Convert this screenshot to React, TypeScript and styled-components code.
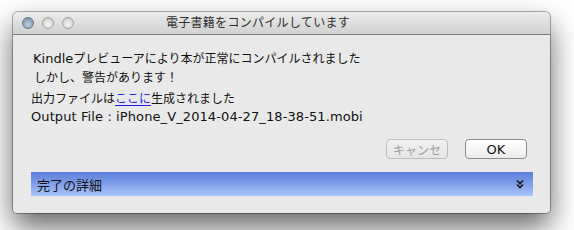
import React from "react";
import styled, { createGlobalStyle } from "styled-components";

const Global = createGlobalStyle`
  html, body { margin: 0; padding: 0; background: #ffffff; }
  body { font-family: "DejaVu Sans", "Noto Sans CJK JP", sans-serif; }
`;

const Page = styled.div`
  width: 574px;
  height: 230px;
  padding: 12px 0 0 13px;
  box-sizing: border-box;
  overflow: hidden;
`;

const Window = styled.div`
  width: 537px;
  height: 201px;
  background: #e9e9e9;
  border-radius: 5px 5px 4px 4px;
  box-shadow: 0 0 0 1px rgba(0, 0, 0, 0.3), 0 14px 30px rgba(0, 0, 0, 0.62);
  display: flex;
  flex-direction: column;
  overflow: hidden;
`;

const TitleBar = styled.div`
  height: 22px;
  flex: none;
  display: flex;
  align-items: center;
  padding-left: 9px;
  background: linear-gradient(#ececec, #d1d1d1);
  border-bottom: 1px solid #7c7c7c;
  border-radius: 5px 5px 0 0;
`;

const Lights = styled.div`
  display: flex;
  gap: 8px;
`;

const Light = styled.div<{ $active?: boolean }>`
  width: 12px;
  height: 12px;
  border-radius: 50%;
  box-sizing: border-box;
  border: 1px solid ${(p) => (p.$active ? "#66798d" : "#a3a3a3")};
  background: ${(p) =>
    p.$active
      ? "radial-gradient(circle at 50% 65%, #c2d2e2 0%, #8ea4ba 55%, #6c8197 100%)"
      : "radial-gradient(circle at 50% 65%, #f6f6f6 0%, #dcdcdc 55%, #bdbdbd 100%)"};
`;

const Title = styled.div`
  flex: 1;
  text-align: center;
  padding-right: 108px;
  font-size: 12px;
  letter-spacing: 0.3px;
  color: #2e2e2e;
  line-height: 22px;
`;

const Body = styled.div`
  flex: 1;
  display: flex;
  flex-direction: column;
  padding: 0 17px 17px 18px;
`;

const Line = styled.div<{ $top: number; $indent?: number; $size?: number }>`
  margin-top: ${(p) => p.$top}px;
  padding-left: ${(p) => p.$indent ?? 0}px;
  height: 18px;
  line-height: 18px;
  font-size: ${(p) => p.$size ?? 12}px;
  letter-spacing: ${(p) => (p.$size ? 0.1 : 0)}px;
  color: #111;
  white-space: nowrap;
`;

const Latin = styled.span`
  font-size: 13px;
`;

const Link = styled.span`
  color: #1f1fe6;
  text-decoration: underline;
  text-underline-offset: 2px;
`;

const Buttons = styled.div`
  margin-top: 13px;
  display: flex;
  justify-content: flex-end;
  gap: 17px;
  padding-right: 6px;
`;

const Button = styled.div<{ $disabled?: boolean }>`
  width: 62px;
  height: 20px;
  box-sizing: border-box;
  border-radius: 4px;
  display: flex;
  align-items: center;
  justify-content: center;
  font-size: ${(p) => (p.$disabled ? 12 : 13)}px;
  border: 1px solid ${(p) => (p.$disabled ? "#bdbdbd" : "#8d8d8d")};
  color: ${(p) => (p.$disabled ? "#9d9d9d" : "#111")};
  background: ${(p) =>
    p.$disabled
      ? "linear-gradient(#f0f0f0, #e6e6e6)"
      : "linear-gradient(#ffffff, #ececec)"};
`;

const DetailBar = styled.div`
  margin-top: 13px;
  height: 24px;
  display: flex;
  align-items: center;
  justify-content: space-between;
  padding: 0 9px 0 6px;
  background: linear-gradient(#5a7ddb 0%, #7d9ce8 45%, #a9c7fa 100%);
  font-size: 13px;
  color: #111;
`;

const Chevron = () => (
  <svg width="8" height="10" viewBox="0 0 8 10">
    <path d="M1 1.5 L4 4.5 L7 1.5" stroke="#111" strokeWidth="1.6" fill="none" />
    <path d="M1 5.5 L4 8.5 L7 5.5" stroke="#111" strokeWidth="1.6" fill="none" />
  </svg>
);

export default function App() {
  return (
    <>
      <Global />
      <Page>
        <Window>
          <TitleBar>
            <Lights>
              <Light $active />
              <Light />
              <Light />
            </Lights>
            <Title>電子書籍をコンパイルしています</Title>
          </TitleBar>
          <Body>
            <Line $top={15} $indent={2}>
              <Latin>Kindle</Latin>プレビューアにより本が正常にコンパイルされました
            </Line>
            <Line $top={1} $indent={3}>しかし、警告があります！</Line>
            <Line $top={3}>
              出力ファイルは<Link>ここに</Link>生成されました
            </Line>
            <Line $top={0} $size={13}>Output File : iPhone_V_2014-04-27_18-38-51.mobi</Line>
            <Buttons>
              <Button $disabled>キャンセ</Button>
              <Button>OK</Button>
            </Buttons>
            <DetailBar>
              <span>完了の詳細</span>
              <Chevron />
            </DetailBar>
          </Body>
        </Window>
      </Page>
    </>
  );
}
